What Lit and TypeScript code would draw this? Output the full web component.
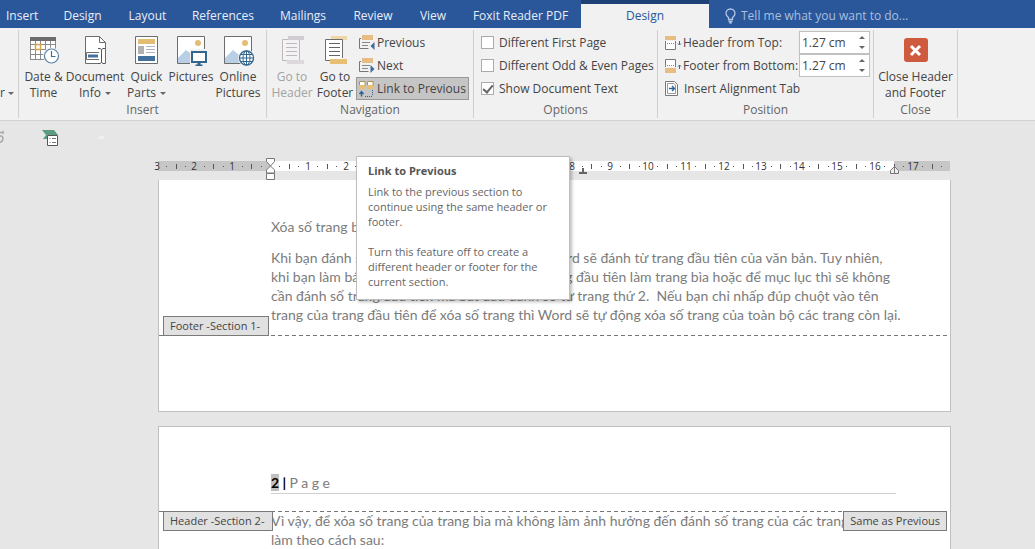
import { LitElement, html, svg, css } from "lit";
import { customElement, property } from "lit/decorators.js";

const ICONS: Record<string, unknown> = {
  date: svg`<svg width="32" height="32" viewBox="0 0 32 32" fill="none">
    <path d="M2 3h26v22H2z" fill="#fff"/><path d="M2 3h26v4H2z" fill="#6d6d6d"/>
    <path d="M2.500 7v18.500M7.500 7v18M12.500 7v18M17.500 7v18M22.500 7v8M27.500 7v8M2 10.500h25M2 15.500h16M2 20.500h15M2 25.500h14" stroke="#8a8a8a"/>
    <path d="M7.500 10.500h5v5h-5z" stroke="#d9a441" stroke-width="1.500"/>
    <circle cx="23.500" cy="22" r="8.500" fill="#f1f1f1"/><circle cx="23.500" cy="22" r="7" fill="#fff" stroke="#5b83a5" stroke-width="1.200"/>
    <path d="M23.500 17v5.500h4" stroke="#3f6f95" stroke-width="1.200"/></svg>`,
  docinfo: svg`<svg width="32" height="32" viewBox="0 0 32 32" fill="none">
    <path d="M6.500 2.500h14l6 6v21h-20z" fill="#fff" stroke="#6d6d6d"/><path d="M20.500 2.500v6h6" stroke="#6d6d6d"/>
    <path d="M7.500 18.500h17v7h-17z" fill="#fff" stroke="#6d6d6d"/><path d="M9 20.500h10v3H9z" fill="#41719c"/>
    <path d="M20 14h5v16h-5z" fill="#fff"/>
    <path d="M19 14.500h2l1.500 1 1.500-1h2M22.500 15.500v13M19 29.500h2l1.500-1 1.500 1h2" stroke="#555"/></svg>`,
  quick: svg`<svg width="32" height="32" viewBox="0 0 32 32" fill="none">
    <path d="M4.500 2.500h22v27h-22z" fill="#fff" stroke="#6d6d6d"/>
    <path d="M7 5h17v5H7z" fill="#e3bd74"/><path d="M7 12h6v8H7z" fill="#b1b1b1"/>
    <path d="M15 12.500h9M15 15.500h9M15 18.500h9" stroke="#aab4c0"/><path d="M7 22h17v5H7z" fill="#41719c"/></svg>`,
  pictures: svg`<svg width="34" height="32" viewBox="0 0 34 32" fill="none">
    <path d="M3.500 2.500h27v27h-27z" fill="#fff" stroke="#6d6d6d"/><path d="M4 24l8-8 4 3v10H4z" fill="#b8cfe6"/>
    <circle cx="24" cy="9" r="3" fill="#e3bd74"/>
    <path d="M16 15h18v17H16z" fill="#f1f1f1"/>
    <path d="M18 18h14v10H18z" fill="#fff" stroke="#34678f" stroke-width="2"/><path d="M23.500 29h3v1.500h-3zM21.500 30.500h7v1.500h-7z" fill="#34678f"/></svg>`,
  online: svg`<svg width="34" height="32" viewBox="0 0 34 32" fill="none">
    <path d="M3.500 2.500h27v27h-27z" fill="#fff" stroke="#6d6d6d"/><path d="M4 24l8-8 6 5v8H4z" fill="#b8cfe6"/>
    <circle cx="24" cy="9" r="3" fill="#e3bd74"/>
    <circle cx="25.500" cy="24" r="8.500" fill="#f1f1f1"/><circle cx="25.500" cy="24" r="7" fill="#fff" stroke="#34678f" stroke-width="1.300"/>
    <path d="M25.500 17v14M18.500 24h14M20 20.500h11M20 27.500h11" stroke="#34678f"/><ellipse cx="25.500" cy="24" rx="3.500" ry="7" stroke="#34678f"/></svg>`,
  gohead: svg`<svg width="32" height="32" viewBox="0 0 32 32" fill="none">
    <path d="M6.500 5.500h17v21h-17z" fill="#f4f2f4" stroke="#bdb9bd"/><path d="M12 2h16v4H12z" fill="#d0ccd2"/>
    <path d="M10 9.500h11M10 13.500h11M10 17.500h11M10 21.500h11" stroke="#bdb9bd"/><path d="M11 26h17v4H11z" fill="#dcd8dc"/></svg>`,
  gofoot: svg`<svg width="32" height="32" viewBox="0 0 32 32" fill="none">
    <path d="M12 2h16v4H12z" fill="#f0d5a6"/><path d="M6.500 5.500h17v21h-17z" fill="#fff" stroke="#6d6d6d"/>
    <path d="M10 9.500h11M10 13.500h11M10 17.500h11M10 21.500h11" stroke="#666"/><path d="M11 25h17v5H11z" fill="#e8bd74"/><path d="M11 24.500h13" stroke="#fff"/></svg>`,
  prev: svg`<svg width="18" height="16" viewBox="0 0 18 16" fill="none">
    <path d="M4 0h11v5H4z" fill="#e8bd83"/><path d="M3 3.500H1.500v10h9" stroke="#777"/><path d="M4 7.500h8M4 10.500h6" stroke="#888"/>
    <path d="M16.500 7v8l-4-4z" fill="#3b6c9c"/></svg>`,
  next: svg`<svg width="18" height="16" viewBox="0 0 18 16" fill="none">
    <path d="M4 0h11v5H4z" fill="#e8bd83"/><path d="M3 3.500H1.500v10h9" stroke="#777"/><path d="M4 7.500h8M4 10.500h6" stroke="#888"/>
    <path d="M12.500 7v8l4-4z" fill="#3b6c9c"/></svg>`,
  link: svg`<svg width="18" height="18" viewBox="0 0 18 18" fill="none">
    <path d="M1 1h6v4H1zM9 1h6v4H9z" fill="#fff"/><path d="M1.500 6V1.500H7V6M9.500 6V1.500H15V6" stroke="#b08d55"/><path d="M1 5h6v4H1zM9 5h6v4H9z" fill="#e8bd74"/>
    <path d="M3.500 16.500v-4.500M1.500 14l2-2.500 2 2.500" stroke="#2f6299" stroke-width="1.400"/><path d="M7 16.500h8M14.500 10v6" stroke="#2f6299" stroke-dasharray="1 1"/></svg>`,
  htop: svg`<svg width="18" height="16" viewBox="1 0 18 16" fill="none">
    <path d="M1.500 6v8.500h10V6" fill="#fff" stroke="#777"/><path d="M1 1h11v4H1z" fill="#e8bd83"/><path d="M1 8.500h12" stroke="#888" stroke-dasharray="1 1"/>
    <path d="M15.500 6v4M14 8.500l1.500 1.500 1.500-1.500" stroke="#3b6c9c"/></svg>`,
  fbot: svg`<svg width="18" height="16" viewBox="1 0 18 16" fill="none">
    <path d="M1.500 9V1.500h10V9" fill="#fff" stroke="#777"/><path d="M1 10h11v5H1z" fill="#e8bd83"/><path d="M1 7.500h12" stroke="#888" stroke-dasharray="1 1"/>
    <path d="M15.500 11V7M14 8.500l1.500-1.500 1.500 1.500" stroke="#3b6c9c"/></svg>`,
  align: svg`<svg width="18" height="16" viewBox="1 0 18 16" fill="none">
    <path d="M1.500 .5h9l3 3v11h-12z" fill="#fff" stroke="#777"/><path d="M3.500 2.500h6.500l1.500 1.500v8.500h-8z" stroke="#999"/>
    <path d="M5 7.500h5M8 5l2.500 2.500L8 10" stroke="#2f6299" stroke-width="1.300"/></svg>`,
  close: svg`<svg width="32" height="32" viewBox="0 0 32 32" fill="none">
    <rect x="4" y="4" width="24" height="24" rx="3" fill="#d05a3e"/><path d="M11 12l9 9M20 12l-9 9" stroke="#fff" stroke-width="3"/></svg>`,
};

@customElement("ribbon-button")
class RibbonButton extends LitElement {
  @property() icon = "";
  @property() top = "";
  @property() bottom = "";
  @property({ type: Boolean }) menu = false;
  @property({ type: Boolean }) off = false;
  static styles = css`
    :host { display: block; }
    .button { all: unset; display: flex; flex-direction: column; align-items: center; width: 100%; white-space: nowrap; line-height: 16px; }
    .button:disabled { color: #a3a3a3; }
    .icon { height: 32px; margin-bottom: 3px; }
    svg { display: block; }
    .row { display: flex; align-items: center; justify-content: center; gap: 4px; }
    .arrow { border: 3px solid transparent; border-top-color: #666; border-bottom: 0; }
  `;
  render() {
    return html`<button class="button" ?disabled=${this.off}>
      <span class="icon">${ICONS[this.icon]}</span>
      <span>${this.top}</span>
      <span class="row">${this.bottom}${this.menu ? html`<span class="arrow"></span>` : null}</span>
    </button>`;
  }
}

@customElement("page-ruler")
class PageRuler extends LitElement {
  static styles = css`
    :host { display: block; height: 24px; overflow: hidden; }
    svg { display: block; }
    .num { font: 10px "Open Sans", sans-serif; fill: #333; text-anchor: middle; }
  `;
  render() {
    const zero = 114;
    const step = 37.8;
    const marks = [];
    for (let q = -12; q <= 71; q++) {
      const x = Math.round(zero + (q * step) / 4);
      if (q === 0) continue;
      if (q % 4 === 0) marks.push(svg`<text class="num" x=${x} y="14">${Math.abs(q / 4)}</text>`);
      else if (q % 2 === 0) marks.push(svg`<path d="M${x + 0.5} 8v5" stroke="#555"/>`);
      else marks.push(svg`<path d="M${x} 10.500h1" stroke="#555"/>`);
    }
    return html`<svg width="801" height="24" viewBox="-6 0 801 24" fill="none" aria-label="Ruler">
      <path d="M2 5h112v10H2zM738 5h56v10h-56z" fill="#c6c6c6"/><path d="M114 5h624v10H114z" fill="#fff"/>
      ${marks}
      <path d="M110.500 2.500h8v3l-4 4.500-4-4.500zM110.500 17v-3l4-4 4 4v3zM110.500 17.500h8v6h-8z" fill="#fff" stroke="#777"/>
      <path d="M423 17h8M427 17v-5" stroke="#666" stroke-width="2"/>
      <path d="M734.500 17.500v-3l4-4 4 4v3z" fill="#eee" stroke="#777"/><path d="M738.500 10v7" stroke="#777"/>
    </svg>`;
  }
}

@customElement("app-root")
class AppRoot extends LitElement {
  static styles = css`
    :host { display: flex; flex-direction: column; height: 100vh; overflow: hidden; background: #e6e6e6; color: #444; font: 12px/16px "Open Sans", "Noto Sans", sans-serif; }
    * { box-sizing: border-box; }
    svg { display: block; }
    .tabs { display: flex; flex: none; height: 28px; background: #2a579a; padding-top: 4px; position: relative; }
    .tablist { display: grid; grid-template-columns: 50px 65px 65px 86px 74px 66px 54px 121px 128px; }
    .tab { display: flex; align-items: center; justify-content: center; color: #e8eef7; text-decoration: none; white-space: nowrap; }
    .first { justify-content: flex-start; padding-left: 6px; }
    .active { background: #f1f1f1; color: #2a579a; box-shadow: 0 -4px #1e4074; }
    .tell { display: flex; align-items: center; gap: 5px; flex: 1; padding-left: 16px; }
    .tellinput { all: unset; flex: 1; color: #b4c8e4; }
    .tellinput::placeholder { color: #a9bfdf; }
    .ribbon { display: flex; flex: none; height: 93px; background: #f1f1f1; border-bottom: 1px solid #d2d2d2; }
    .group { display: flex; flex-direction: column; justify-content: space-between; padding: 4px 3px 0; border-right: 1px solid #d0d0d0; height: 88px; margin-top: 2px; }
    .cut { width: 19px; }
    .insert { width: 248px; }
    .nav { width: 207px; }
    .options { width: 184px; }
    .position { width: 216px; }
    .closing { width: 84px; }
    .name { text-align: center; line-height: 16px; color: #666; }
    .items { display: grid; justify-content: start; }
    .insertcols { grid-template-columns: 43px 60px 43px 46px 48px; }
    .navcols { grid-template-columns: 44px 42px 113px; }
    .closecols { grid-template-columns: 1fr; justify-content: stretch; }
    .cutbtn { all: unset; display: flex; align-items: flex-start; gap: 3px; padding-top: 51px; margin-left: -3px; white-space: nowrap; }
    .arrow { border: 3px solid transparent; border-top-color: #666; border-bottom: 0; margin-top: 7px; }
    .stack { display: grid; grid-auto-rows: 23px; margin-top: -3px; }
    .small { all: unset; box-sizing: border-box; display: flex; align-items: center; gap: 1px; padding-left: 1px; white-space: nowrap; border: 1px solid transparent; height: 23px; width: 100%; }
    .wide { padding-left: 3px; }
    .on { background: #c5c5c5; border-color: #989898; }
    .anchor { position: relative; }
    .tip { position: absolute; z-index: 5; left: 0; top: 79px; width: 214px; background: #fff; border: 1px solid #bebebe; box-shadow: 2px 2px 3px rgba(0, 0, 0, 0.25); padding: 6px 11px 10px; font-size: 11px; line-height: 15px; color: #666; white-space: nowrap; }
    .tiptitle { margin: 0 0 6px; font-size: 11px; font-weight: 700; color: #555; }
    .tiptext { margin: 0 0 15px; }
    .tiplast { margin: 0; }
    .check { display: flex; align-items: center; gap: 5px; padding-left: 4px; height: 23px; white-space: nowrap; }
    .box { appearance: none; width: 13px; height: 13px; margin: 0; border: 1px solid #ababab; background: #fff; display: grid; place-items: center; }
    .box:checked::after { content: ""; width: 4px; height: 8px; border: solid #666; border-width: 0 2px 2px 0; transform: rotate(40deg); margin-bottom: 2px; }
    .field { display: grid; grid-template-columns: 18px 1fr 71px; align-items: center; height: 23px; padding-left: 4px; white-space: nowrap; }
    .spin { display: flex; height: 23px; border: 1px solid #c0c0c0; background: #fff; }
    .value { all: unset; flex: 1; min-width: 0; padding-left: 2px; }
    .steps { display: grid; align-content: space-evenly; width: 15px; }
    .step { all: unset; height: 9px; display: grid; place-items: center; }
    .up { border: 3px solid transparent; border-bottom-color: #666; border-top: 0; }
    .down { border: 3px solid transparent; border-top-color: #666; border-bottom: 0; }
    .quick { display: flex; align-items: center; flex: none; height: 33px; }
    .undo { all: unset; width: 42px; height: 18px; }
    .qat { all: unset; width: 18px; height: 18px; }
    .more { width: 6px; height: 3px; background: #efefef; margin-left: 38px; }
    .work { flex: 1; min-height: 0; padding: 2px 84px 0 150px; overflow: hidden; }
    .sheets { margin-left: 8px; }
    .page { position: relative; background: #fff; border: 1px solid #c0c0c0; padding: 0 54px 0 112px; color: #7c7c7c; font: 14px/19px Lato, "Open Sans", sans-serif; white-space: nowrap; }
    .one { height: 232px; border-top: 0; padding-top: 37px; margin-bottom: 14px; }
    .two { height: 240px; padding-top: 46px; }
    .para { margin: 0; }
    .title { margin: 0 0 12px; }
    .dash { position: absolute; left: 0; right: 0; height: 1px; background: repeating-linear-gradient(90deg, #777 0 4px, transparent 4px 7px); }
    .dash1 { top: 155px; }
    .dash2 { top: 84px; }
    .flag { position: absolute; height: 20px; border: 1px solid #7a7a7a; background: #e1e1e1; color: #444; font: 11px/18px "Open Sans", sans-serif; padding: 0 6px; }
    .flag1 { left: 4px; top: 136px; padding-right: 8px; }
    .flag2 { left: 4px; top: 84px; padding-right: 8px; }
    .flag3 { right: 3px; top: 84px; }
    .head { border-bottom: 1px solid #d0d0d0; padding-bottom: 1px; margin-bottom: 17px; }
    .no { color: #000; font-weight: 700; }
    .sel { background: #c0c0c0; }
  `;

  check(id: string, text: string, on: boolean) {
    return html`<div class="check"><input class="box" type="checkbox" id=${id} .checked=${on} /><label for=${id}>${text}</label></div>`;
  }

  spin(id: string, icon: string, text: string) {
    return html`<div class="field">${ICONS[icon]}<label for=${id}>${text}</label>
      <span class="spin"><input class="value" id=${id} value="1.27 cm" />
        <span class="steps"><button class="step" aria-label="Increase"><span class="up"></span></button><button class="step" aria-label="Decrease"><span class="down"></span></button></span>
      </span></div>`;
  }

  render() {
    const tabs = ["Insert", "Design", "Layout", "References", "Mailings", "Review", "View", "Foxit Reader PDF"];
    return html`
      <header class="tabs">
        <nav class="tablist">
          ${tabs.map((t, i) => html`<a class="tab ${i === 0 ? "first" : ""}" href="#">${t}</a>`)}
          <a class="tab active" href="#">Design</a>
        </nav>
        <div class="tell">
          <svg width="11" height="16" viewBox="0 0 11 16" fill="none" stroke="#b4c8e4" stroke-width="1.300"><path d="M3.500 11.500V9.500C2 8.500 1 7 1 5.500a4.500 4.500 0 0 1 9 0c0 1.500-1 3-2.500 4v2zM3.500 13.500h4M4.500 15h2"/></svg>
          <input class="tellinput" aria-label="Tell me" placeholder="Tell me what you want to do..." />
        </div>
      </header>
      <section class="ribbon">
        <div class="group cut"><button class="cutbtn">r<span class="arrow"></span></button></div>
        <div class="group insert">
          <div class="items insertcols">
            <ribbon-button icon="date" top="Date &amp;" bottom="Time"></ribbon-button>
            <ribbon-button icon="docinfo" top="Document" bottom="Info" menu></ribbon-button>
            <ribbon-button icon="quick" top="Quick" bottom="Parts" menu></ribbon-button>
            <ribbon-button icon="pictures" top="Pictures"></ribbon-button>
            <ribbon-button icon="online" top="Online" bottom="Pictures"></ribbon-button>
          </div>
          <div class="name">Insert</div>
        </div>
        <div class="group nav">
          <div class="items navcols">
            <ribbon-button icon="gohead" top="Go to" bottom="Header" off></ribbon-button>
            <ribbon-button icon="gofoot" top="Go to" bottom="Footer"></ribbon-button>
            <div class="stack">
              <button class="small">${ICONS.prev}Previous</button>
              <button class="small">${ICONS.next}Next</button>
              <div class="anchor">
                <button class="small on" aria-describedby="tip">${ICONS.link}Link to Previous</button>
                <div class="tip" id="tip" role="tooltip">
                  <p class="tiptitle">Link to Previous</p>
                  <p class="tiptext">Link to the previous section to<br />continue using the same header or<br />footer.</p>
                  <p class="tiplast">Turn this feature off to create a<br />different header or footer for the<br />current section.</p>
                </div>
              </div>
            </div>
          </div>
          <div class="name">Navigation</div>
        </div>
        <div class="group options">
          <div class="stack">
            ${this.check("first", "Different First Page", false)}
            ${this.check("odd", "Different Odd & Even Pages", false)}
            ${this.check("show", "Show Document Text", true)}
          </div>
          <div class="name">Options</div>
        </div>
        <div class="group position">
          <div class="stack">
            ${this.spin("ht", "htop", "Header from Top:")}
            ${this.spin("fb", "fbot", "Footer from Bottom:")}
            <button class="small wide">${ICONS.align}Insert Alignment Tab</button>
          </div>
          <div class="name">Position</div>
        </div>
        <div class="group closing">
          <div class="items closecols"><ribbon-button icon="close" top="Close Header" bottom="and Footer"></ribbon-button></div>
          <div class="name">Close</div>
        </div>
      </section>
      <div class="quick">
        <button class="undo" aria-label="Undo"><svg width="6" height="18" viewBox="0 0 6 18" fill="none"><path d="M0 3.500h3.500M0 7c4-1 4 6-1 6.500M3 2v3" stroke="#a8a8a8" stroke-width="1.500"/></svg></button>
        <button class="qat" aria-label="Macro"><svg width="18" height="18" viewBox="0 0 18 18" fill="none"><path d="M0 1h12l4 5H5v4H1l3-4z" fill="#5a9c80"/><path d="M5.500 6.500h10v10h-10z" fill="#fff" stroke="#555"/><path d="M7.500 9.500h1M10 9.500h4M7.500 13.500h1M10 13.500h4" stroke="#777"/></svg></button>
        <span class="more"></span>
      </div>
      <main class="work">
        <page-ruler></page-ruler>
        <div class="sheets">
          <article class="page one">
            <p class="title">Xóa số trang bìa</p>
            <p class="para">Khi bạn đánh số trang trong các file word thì Word sẽ đánh từ trang đầu tiên của văn bản. Tuy nhiên,<br />khi bạn làm báo cáo, luận văn, bạn muốn để trang đầu tiên làm trang bìa hoặc để mục lục thì sẽ không<br />cần đánh số trang đầu tiên mà bắt đầu đánh số từ trang thứ 2.&nbsp; Nếu bạn chỉ nhấp đúp chuột vào tên<br />trang của trang đầu tiên để xóa số trang thì Word sẽ tự động xóa số trang của toàn bộ các trang còn lại.</p>
            <div class="dash dash1"></div>
            <div class="flag flag1">Footer -Section 1-</div>
          </article>
          <article class="page two">
            <div class="head"><span class="no"><span class="sel">2</span> | </span>P a g e</div>
            <p class="para">Vì vậy, để xóa số trang của trang bìa mà không làm ảnh hưởng đến đánh số trang của các trang khác<br />làm theo cách sau:</p>
            <div class="dash dash2"></div>
            <div class="flag flag2">Header -Section 2-</div>
            <div class="flag flag3">Same as Previous</div>
          </article>
        </div>
      </main>`;
  }
}
